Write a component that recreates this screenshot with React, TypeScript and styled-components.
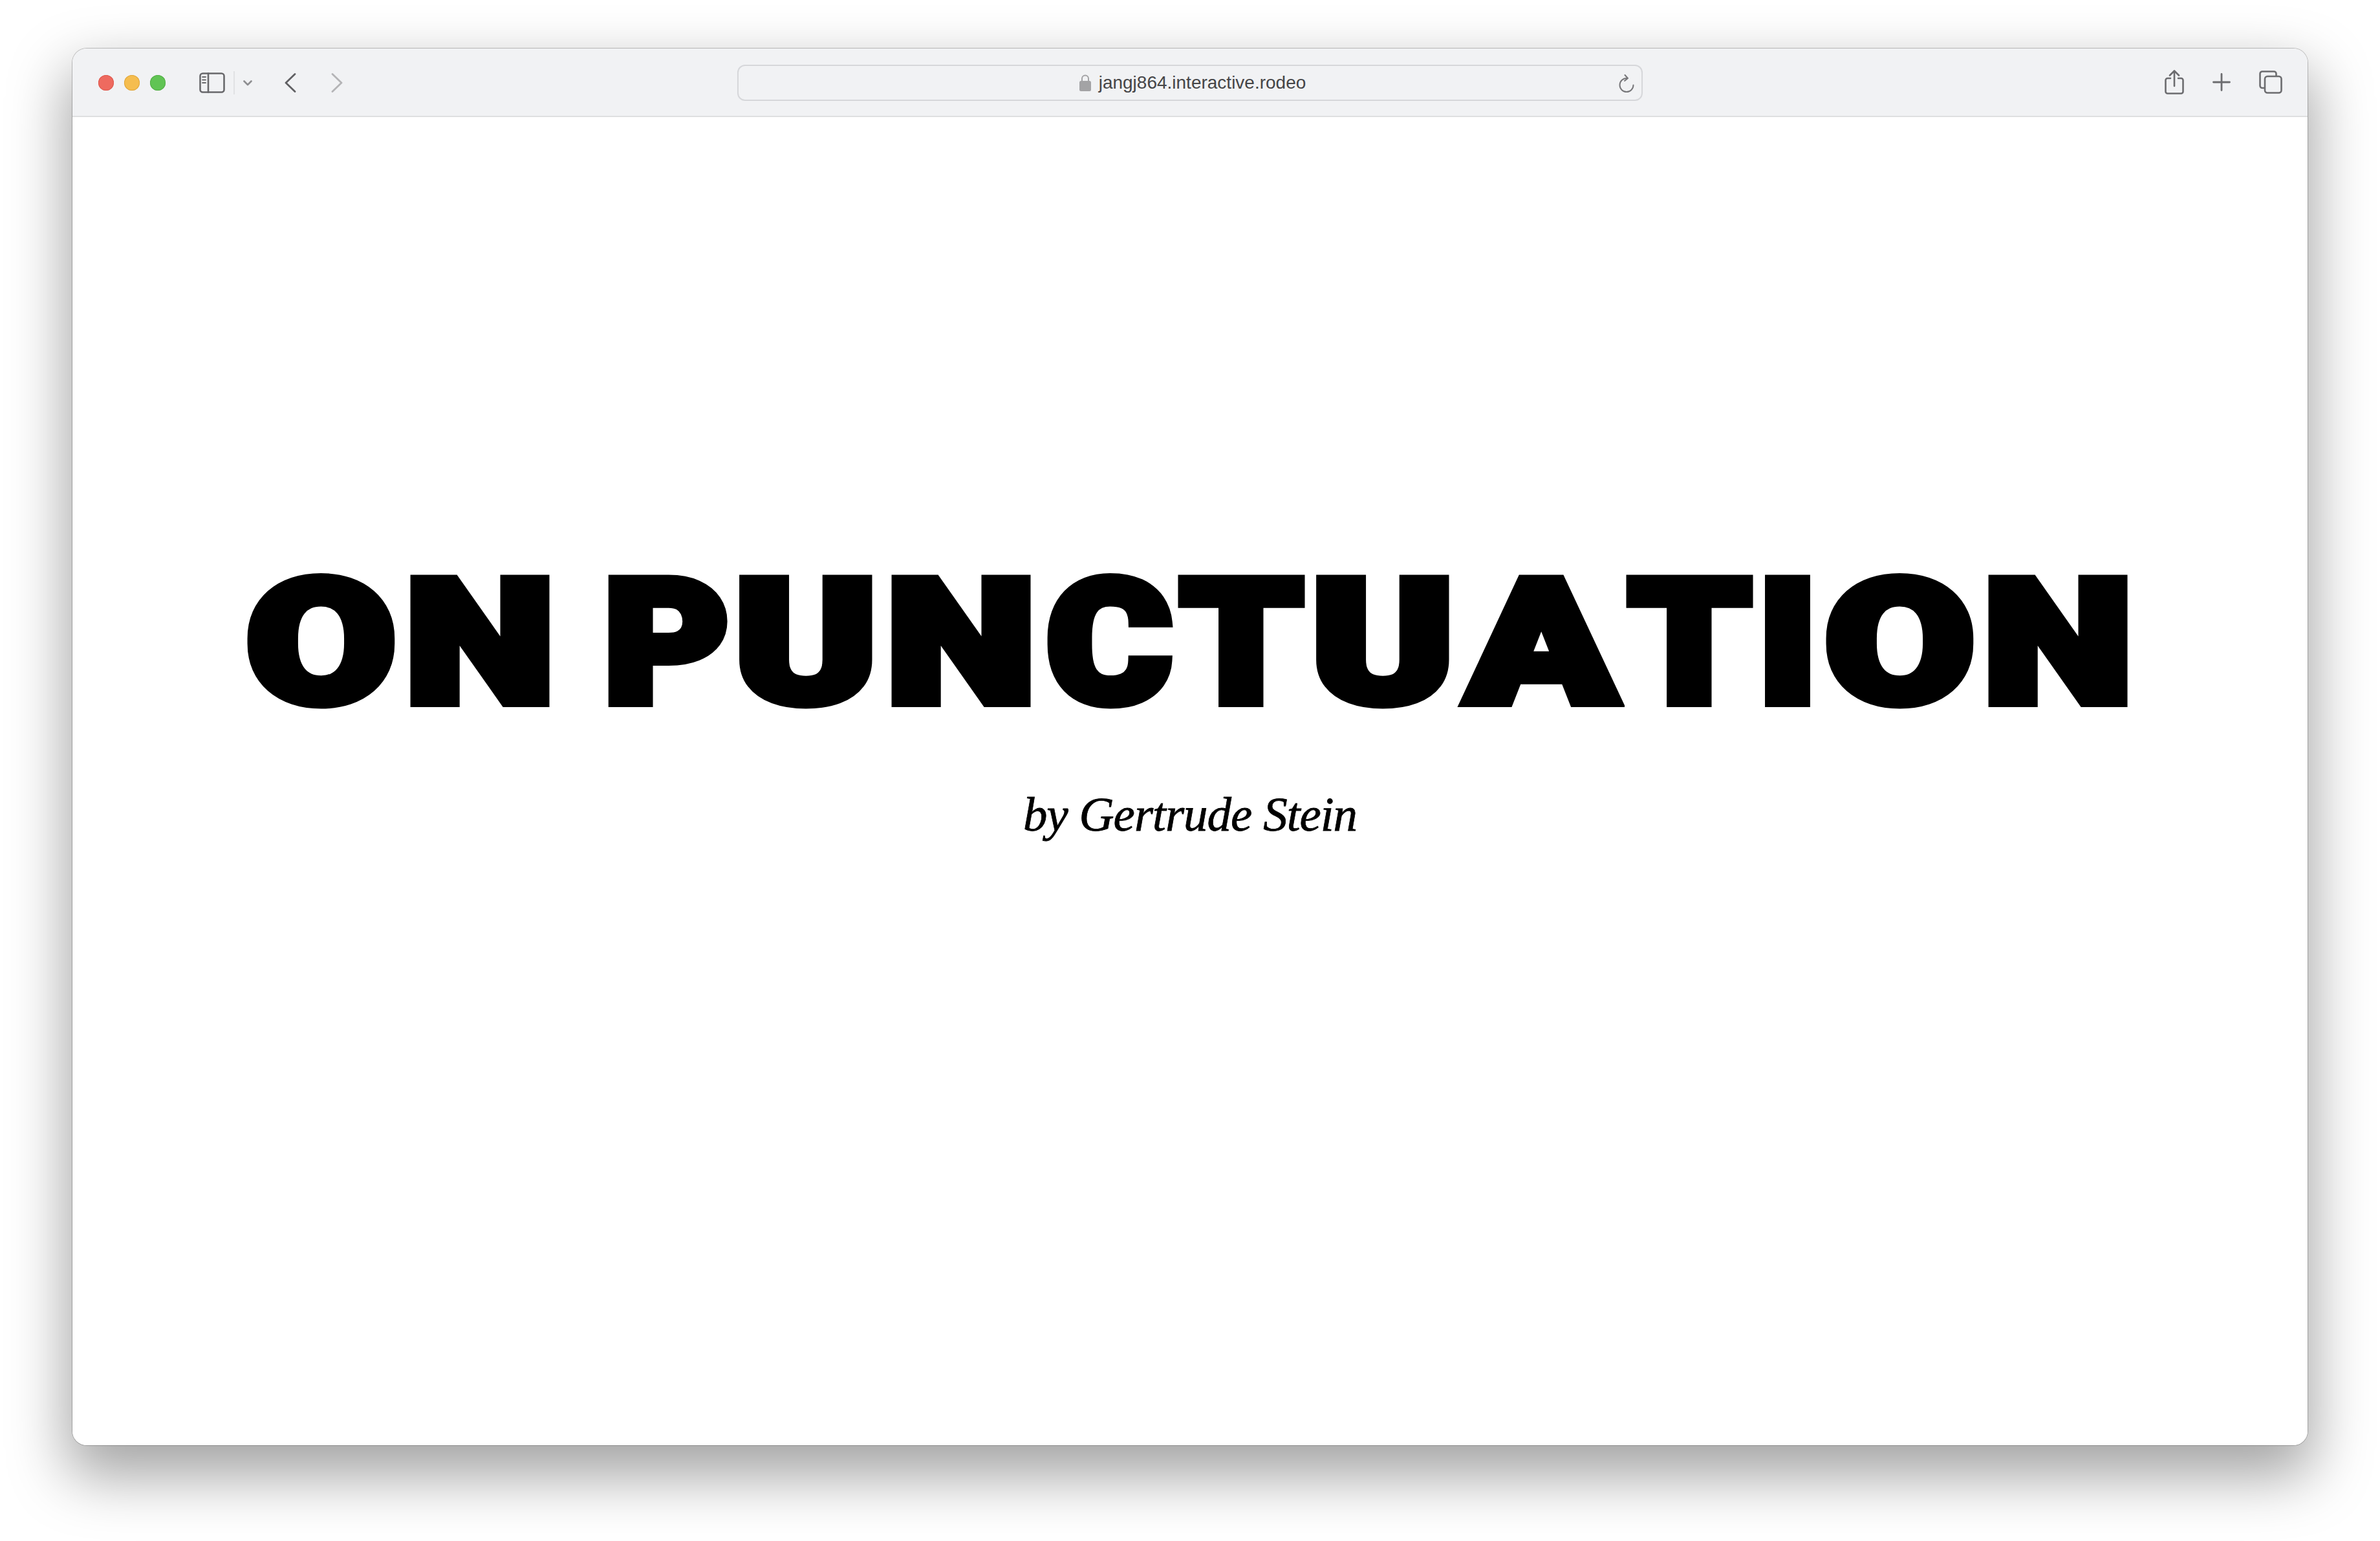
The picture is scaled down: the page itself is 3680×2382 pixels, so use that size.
import React, { FC } from 'react';
import styled, { createGlobalStyle } from 'styled-components';

const GlobalStyle = createGlobalStyle`
  html, body {
    margin: 0;
    padding: 0;
    background: #fff;
  }
  * {
    box-sizing: border-box;
  }
`;

const Page = styled.div`
  width: 3680px;
  height: 2382px;
  padding: 75px 112px 148px;
  overflow: hidden;
  background: #fff;
`;

const BrowserWindow = styled.div`
  height: 100%;
  display: flex;
  flex-direction: column;
  background: #fff;
  border-radius: 22px;
  overflow: hidden;
  box-shadow: 0 0 0 1px rgba(0, 0, 0, 0.22), 0 40px 90px 8px rgba(0, 0, 0, 0.36);
`;

const Toolbar = styled.header`
  flex: none;
  height: 106px;
  display: grid;
  grid-template-columns: 1fr 1400px 1fr;
  align-items: center;
  padding-top: 2px;
  background: #f1f2f4;
  border-bottom: 2px solid #dedfe0;
`;

const LeftGroup = styled.div`
  display: flex;
  align-items: center;
  padding-left: 40px;
`;

const Light = styled.span<{ $color: string; $edge: string }>`
  width: 24px;
  height: 24px;
  margin-right: 16px;
  border-radius: 50%;
  background: ${(p) => p.$color};
  box-shadow: inset 0 0 0 1px ${(p) => p.$edge};
`;

const SidebarButton = styled.div`
  display: flex;
  align-items: center;
  margin-left: 36px;
`;

const Divider = styled.span`
  width: 2px;
  height: 36px;
  margin: 0 13px;
  background: #e1e2e4;
`;

const NavIcon = styled.svg<{ $gap: number }>`
  display: block;
  margin-left: ${(p) => p.$gap}px;
`;

const AddressBar = styled.div`
  position: relative;
  height: 56px;
  display: flex;
  align-items: center;
  justify-content: center;
  gap: 12px;
  padding-left: 8px;
  border: 2px solid #d6d7da;
  border-radius: 12px;
`;

const Url = styled.span`
  font-family: 'Liberation Sans', Arial, sans-serif;
  font-size: 28px;
  color: #454547;
`;

const ReloadIcon = styled.svg`
  position: absolute;
  right: 11px;
  top: 13px;
`;

const RightGroup = styled.div`
  display: flex;
  align-items: center;
  justify-content: flex-end;
  gap: 44px;
  padding: 0 39px 3px 0;
`;

const Content = styled.main`
  flex: 1;
  display: flex;
  flex-direction: column;
  align-items: center;
  padding-top: 711px;
  background: #fff;
`;

const Title = styled.h1`
  display: flex;
  margin: 0 9px 0 0;
  font-family: Roboto, 'Liberation Sans', sans-serif;
  font-size: 265px;
  line-height: 205px;
  font-weight: 900;
  color: #000;
  white-space: pre;
  -webkit-text-stroke: 16px #000;
`;

// each letter of the title sits in a slot as wide as its ink in the reference
const Slot = styled.span<{ $width: number; $gap: number }>`
  flex: none;
  display: flex;
  justify-content: center;
  width: ${(p) => p.$width}px;
  margin-left: ${(p) => p.$gap}px;
`;

const Ink = styled.span<{ $scale: number }>`
  flex: none;
  transform: scaleX(${(p) => p.$scale});
`;

const Byline = styled.p`
  margin: 122px 0 0;
  font-family: 'Liberation Serif', 'Times New Roman', serif;
  font-style: italic;
  font-size: 75px;
  line-height: 80px;
  letter-spacing: -1px;
  color: #000;
  -webkit-text-stroke: 0.8px #000;
`;

const letters = [
  { char: 'O', width: 235, gap: 0, scale: 1.26 },
  { char: 'N', width: 220, gap: 18, scale: 1.24 },
  { char: ' ', width: 84, gap: 0, scale: 1 },
  { char: 'P', width: 189, gap: 0, scale: 1.12 },
  { char: 'U', width: 207, gap: 18, scale: 1.25 },
  { char: 'N', width: 219, gap: 27, scale: 1.24 },
  { char: 'C', width: 199, gap: 19, scale: 1.11 },
  { char: 'T', width: 197, gap: 7, scale: 1.13 },
  { char: 'U', width: 208, gap: 16, scale: 1.25 },
  { char: 'A', width: 255, gap: 14, scale: 1.27 },
  { char: 'T', width: 198, gap: 3, scale: 1.13 },
  { char: 'I', width: 73, gap: 16, scale: 1.14 },
  { char: 'O', width: 234, gap: 19, scale: 1.26 },
  { char: 'N', width: 219, gap: 19, scale: 1.24 },
];

const stroke = { fill: 'none', strokeLinecap: 'round', strokeLinejoin: 'round' } as const;

const App: FC = () => (
  <Page>
    <GlobalStyle />
    <BrowserWindow>
      <Toolbar>
        <LeftGroup>
          <Light $color="#ee6a5f" $edge="#dd5a50" />
          <Light $color="#f5bd4f" $edge="#dfa63c" />
          <Light $color="#61c454" $edge="#54ad47" />
          <SidebarButton>
            <svg width="40" height="32" viewBox="0 0 40 32" {...stroke} stroke="#68686b" strokeWidth="2.6">
              <rect x="1.5" y="1.5" width="37" height="29" rx="4" />
              <path d="M14 1.5v29" />
              <path d="M5 7h5M5 11.5h5M5 16h5" strokeWidth="1.8" />
            </svg>
            <Divider />
            <svg width="14" height="9" viewBox="0 0 14 9" {...stroke} stroke="#8e8e91" strokeWidth="2.6">
              <path d="M1.5 1.5 7 7l5.5-5.5" />
            </svg>
          </SidebarButton>
          <NavIcon $gap={50} width="18" height="30" viewBox="0 0 18 30" {...stroke} stroke="#606063" strokeWidth="2.8">
            <path d="M16 1.5 2 15l14 13.5" />
          </NavIcon>
          <NavIcon $gap={54} width="18" height="30" viewBox="0 0 18 30" {...stroke} stroke="#b4b4b6" strokeWidth="2.8">
            <path d="M2 1.5 16 15 2 28.5" />
          </NavIcon>
        </LeftGroup>
        <AddressBar>
          <svg width="18" height="26" viewBox="0 0 18 26">
            <path d="M4 11V6.5a5 5 0 0 1 10 0V11" fill="none" stroke="#a3a3a5" strokeWidth="2" />
            <rect x="0" y="10" width="18" height="16" rx="2.5" fill="#a3a3a5" />
          </svg>
          <Url>jangj864.interactive.rodeo</Url>
          <ReloadIcon width="24" height="28" viewBox="0 0 24 28" {...stroke} stroke="#77777a" strokeWidth="2">
            <path d="M12 6a10.5 10.5 0 1 0 10.5 10.5" />
            <path d="M9.5 1 14 6l-5 4" />
          </ReloadIcon>
        </AddressBar>
        <RightGroup>
          <svg width="30" height="38" viewBox="0 0 30 38" {...stroke} stroke="#6c6c6f" strokeWidth="2.6">
            <path d="M9 13H4.5A3 3 0 0 0 1.5 16v17.5a3 3 0 0 0 3 3h21a3 3 0 0 0 3-3V16a3 3 0 0 0-3-3H21" />
            <path d="M15 25V2M8 8.5 15 1.5l7 7" />
          </svg>
          <svg width="28" height="28" viewBox="0 0 28 28" {...stroke} stroke="#6c6c6f" strokeWidth="2.8">
            <path d="M14 1.5v25M1.5 14h25" />
          </svg>
          <svg width="36" height="36" viewBox="0 0 36 36" {...stroke} stroke="#6c6c6f" strokeWidth="2.6">
            <path d="M8 27H5a3.5 3.5 0 0 1-3.5-3.5V5A3.5 3.5 0 0 1 5 1.500h18A3.500 3.500 0 0 1 26.500 5v3" />
            <rect x="9" y="9" width="25.500" height="25.500" rx="4" />
          </svg>
        </RightGroup>
      </Toolbar>
      <Content>
        <Title>
          {letters.map((l, i) => (
            <Slot key={i} $width={l.width} $gap={l.gap}>
              <Ink $scale={l.scale}>{l.char}</Ink>
            </Slot>
          ))}
        </Title>
        <Byline>by Gertrude Stein</Byline>
      </Content>
    </BrowserWindow>
  </Page>
);

export default App;
